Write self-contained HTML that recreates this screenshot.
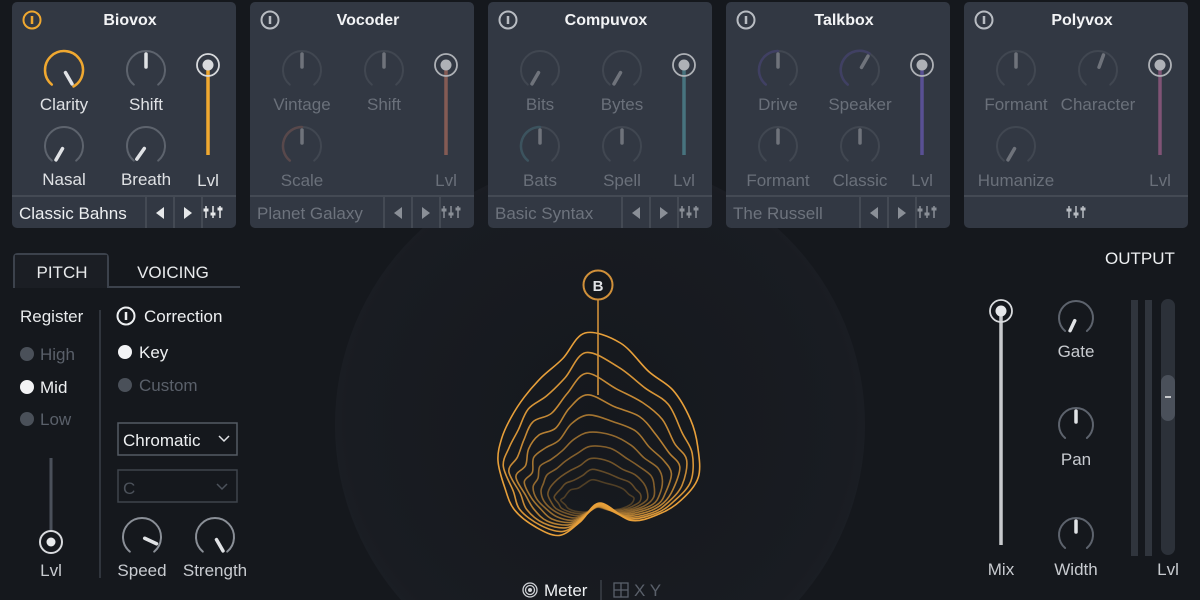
<!DOCTYPE html>
<html><head><meta charset="utf-8"><style>
html,body{margin:0;padding:0;background:#15181d;width:1200px;height:600px;overflow:hidden}
svg{display:block}
text{font-family:"Liberation Sans",sans-serif}
</style></head><body>
<svg id="s" width="1200" height="600" viewBox="0 0 1200 600" xmlns="http://www.w3.org/2000/svg">
<defs>
<radialGradient id="bg" cx="600" cy="420" r="280" gradientUnits="userSpaceOnUse">
<stop offset="0" stop-color="#15181d"/><stop offset="0.9" stop-color="#191c22"/><stop offset="1" stop-color="#1c1f25"/>
</radialGradient>
</defs>
<rect width="1200" height="600" fill="#15181d"/>
<circle cx="600" cy="425" r="265" fill="url(#bg)"/>
<g id="g"></g>
</svg>
<script>
const g=document.getElementById('g');let h='';
function P(a){return a*Math.PI/180}
function pt(cx,cy,r,a){return [cx+r*Math.sin(P(a)),cy-r*Math.cos(P(a))]}
function arc(cx,cy,r,a1,a2,col,w){const p1=pt(cx,cy,r,a1),p2=pt(cx,cy,r,a2);const large=(a2-a1)>180?1:0;
return `<path d="M${p1[0].toFixed(1)} ${p1[1].toFixed(1)} A${r} ${r} 0 ${large} 1 ${p2[0].toFixed(1)} ${p2[1].toFixed(1)}" fill="none" stroke="${col}" stroke-width="${w}" stroke-linecap="round"/>`}
function knob(cx,cy,ang,op,acol,afrom,r,ac){r=r||19;let s=`<g opacity="${op}">`;
s+=arc(cx,cy,r,-140,140,ac||'#5d636d',2);
if(acol){s+=arc(cx,cy,r,afrom,ang,acol,2.5)}
const a=pt(cx,cy,3,ang),b=pt(cx,cy,r-3,ang);
s+=`<line x1="${a[0]}" y1="${a[1]}" x2="${b[0]}" y2="${b[1]}" stroke="#e0e2e5" stroke-width="3.5" stroke-linecap="round"/></g>`;return s}
function txt(x,y,t,sz,col,wt,anc){return `<text x="${x}" y="${y}" font-size="${sz}" fill="${col}" font-weight="${wt||'normal'}" text-anchor="${anc||'middle'}">${t}</text>`}
function power(cx,cy,col){return `<circle cx="${cx}" cy="${cy}" r="8.5" fill="none" stroke="${col}" stroke-width="2"/><line x1="${cx}" y1="${cy-4}" x2="${cx}" y2="${cy+4}" stroke="${col}" stroke-width="2.5"/>`}
function mixer(cx,cy,col){let s='';[-7,0,7].forEach((d,i)=>{s+=`<line x1="${cx+d}" y1="${cy-6}" x2="${cx+d}" y2="${cy+6}" stroke="${col}" stroke-width="1.5"/><rect x="${cx+d-2.5}" y="${cy+[-2,2,-3][i]-1.5}" width="5" height="3" fill="${col}"/>`});return s}
function vslider(x,y1,y2,col,op){return `<g opacity="${op}"><line x1="${x}" y1="${y1}" x2="${x}" y2="${y2}" stroke="${col}" stroke-width="3.5"/><circle cx="${x}" cy="${y1}" r="11" fill="none" stroke="#d8dadd" stroke-width="1.8"/><circle cx="${x}" cy="${y1}" r="5.5" fill="#d8dadd"/></g>`}
const panels=[
{x:12,t:'Biovox',on:true,col:'#f0a830',preset:'Classic Bahns',k:[['Clarity',150,'#f0a830',-140],['Shift',0],['Nasal',-150],['Breath',-145]]},
{x:250,t:'Vocoder',col:'#a0675a',preset:'Planet Galaxy',k:[['Vintage',0],['Shift',0],['Scale',0,'#a0675a',-140],null]},
{x:488,t:'Compuvox',col:'#4f8792',preset:'Basic Syntax',k:[['Bits',-150],['Bytes',-150],['Bats',0,'#4f8792',-140],['Spell',0]]},
{x:726,t:'Talkbox',col:'#6658b0',preset:'The Russell',k:[['Drive',0,'#5a4fa0',-140],['Speaker',30,'#5a4fa0',-140],['Formant',0],['Classic',0]]},
{x:964,t:'Polyvox',col:'#9a5c86',preset:null,k:[['Formant',0],['Character',20],['Humanize',-150],null]}];
panels.forEach(p=>{const x=p.x;
h+=`<rect x="${x}" y="2" width="224" height="226" rx="5" fill="#323843"/>`;
h+=`<line x1="${x}" y1="196" x2="${x+224}" y2="196" stroke="#4a505b" stroke-width="1.5"/>`;
h+=power(x+20,20,p.on?'#f0a830':'#b8bcc2');
h+=txt(x+118,25,p.t,16,'#f2f3f5','bold');
const op=p.on?1:0.35, lc=p.on?'#dfe1e4':'#6a707a';
const pos=[[x+52,70,110],[x+134,70,110],[x+52,146,185],[x+134,146,185]];
p.k.forEach((k,i)=>{if(!k)return;const [cx,cy,ly]=pos[i];h+=knob(cx,cy,k[1],op,k[2],k[3]);h+=txt(cx,ly+(i>=2&&!p.on?1:0),k[0],17,lc);});
h+=vslider(x+196,65,155,p.col,p.on?1:0.75);
h+=txt(x+196,186,'Lvl',17,lc);
if(p.preset){
h+=txt(x+7,219,p.preset,17,p.on?'#eceef0':'#6d737d','normal','start');
[x+134,x+162,x+190].forEach(v=>h+=`<line x1="${v}" y1="197" x2="${v}" y2="228" stroke="#4a505b" stroke-width="1.5"/>`);
const tc=p.on?'#e6e8ea':'#8a8f97';
h+=`<polygon points="${x+152},207 ${x+152},219 ${x+144},213" fill="${tc}"/><polygon points="${x+172},207 ${x+172},219 ${x+180},213" fill="${tc}"/>`;
h+=mixer(x+201,212,tc);
}else h+=mixer(x+112,212,'#b8bcc2');
});
// left tabs
h+=`<path d="M14 288 V258 Q14 254 18 254 H104 Q108 254 108 258 V287 H240" fill="none" stroke="#3c424c" stroke-width="2"/>`;
h+=`<rect x="15" y="255" width="92" height="33" fill="#1b1e24"/>`;
h+=txt(62,278,'PITCH',17,'#e8eaec');h+=txt(173,278,'VOICING',17,'#e8eaec');
h+=txt(20,322,'Register',17,'#e8eaec','normal','start');
h+=`<line x1="100" y1="310" x2="100" y2="578" stroke="#30353d" stroke-width="2"/>`;
[['High',354,0],['Mid',387,1],['Low',419,0]].forEach(r=>{h+=`<circle cx="27" cy="${r[1]}" r="7" fill="${r[2]?'#f2f3f5':'#4a5059'}"/>`+txt(40,r[1]+6,r[0],17,r[2]?'#eef0f2':'#5a606a','normal','start')});
h+=`<line x1="51" y1="458" x2="51" y2="540" stroke="#4a505a" stroke-width="3"/><circle cx="51" cy="542" r="11" fill="#15181d" stroke="#d8dadd" stroke-width="2"/><circle cx="51" cy="542" r="4.5" fill="#e8eaec"/>`;
h+=txt(51,576,'Lvl',17,'#c8cbd0');
h+=power(126,316,'#eef0f2')+txt(144,322,'Correction',17,'#eef0f2','normal','start');
h+=`<circle cx="125" cy="352" r="7" fill="#f2f3f5"/>`+txt(139,358,'Key',17,'#eef0f2','normal','start');
h+=`<circle cx="125" cy="385" r="7" fill="#4a5059"/>`+txt(139,391,'Custom',17,'#5a606a','normal','start');
h+=`<rect x="118" y="423" width="119" height="32" fill="none" stroke="#555b65" stroke-width="1.5"/>`+txt(123,446,'Chromatic',17,'#eef0f2','normal','start')+`<path d="M219 436 l5 5 l5 -5" fill="none" stroke="#e0e2e5" stroke-width="1.5"/>`;
h+=`<rect x="118" y="470" width="119" height="32" fill="none" stroke="#3e444d" stroke-width="1.5"/>`+txt(123,494,'C',17,'#4c525b','normal','start')+`<path d="M217 484 l5 5 l5 -5" fill="none" stroke="#4c525b" stroke-width="1.5"/>`;
h+=knob(142,537,115,1,null,null,19,'#8a8f97')+txt(142,576,'Speed',17,'#c8cbd0');
h+=knob(215,537,150,1,null,null,19,'#8a8f97')+txt(215,576,'Strength',17,'#c8cbd0');
// output
h+=txt(1140,264,'OUTPUT',17,'#eef0f2');
h+=`<line x1="1001" y1="311" x2="1001" y2="545" stroke="#c8cacd" stroke-width="3.5"/><circle cx="1001" cy="311" r="11" fill="none" stroke="#d8dadd" stroke-width="1.8"/><circle cx="1001" cy="311" r="5.5" fill="#e6e8ea"/>`;
h+=txt(1001,575,'Mix',17,'#c8cbd0');
h+=knob(1076,318,-155,1,null,null,17)+txt(1076,357,'Gate',17,'#c8cbd0');
h+=knob(1076,425,0,1,null,null,17)+txt(1076,465,'Pan',17,'#c8cbd0');
h+=knob(1076,535,0,1,null,null,17)+txt(1076,575,'Width',17,'#c8cbd0');
h+=`<rect x="1131" y="300" width="7" height="256" fill="#30353d"/><rect x="1145" y="300" width="7" height="256" fill="#30353d"/>`;
h+=`<rect x="1161" y="299" width="14" height="256" rx="7" fill="#2c3139"/><rect x="1161" y="375" width="14" height="46" rx="7" fill="#4a505a"/><line x1="1165" y1="397" x2="1171" y2="397" stroke="#c8cacd" stroke-width="2"/>`;
h+=txt(1168,575,'Lvl',17,'#c8cbd0');
// contours
const O=[[585,333],[620,346],[650,368],[672,392],[690,420],[700,445],[696,478],[682,500],[660,514],[630,520],[600,503],[580,522],[560,535],[535,528],[516,510],[505,488],[496,460],[504,440],[510,416],[524,396],[543,380],[562,355]];
const ax=597,ay=508,n=O.length;
function cr(pts){let d='';for(let i=0;i<pts.length;i++){const p0=pts[(i-1+pts.length)%pts.length],p1=pts[i],p2=pts[(i+1)%pts.length],p3=pts[(i+2)%pts.length];
if(i==0)d+=`M${p1[0].toFixed(1)} ${p1[1].toFixed(1)}`;
const c1=[p1[0]+(p2[0]-p0[0])/6,p1[1]+(p2[1]-p0[1])/6],c2=[p2[0]-(p3[0]-p1[0])/6,p2[1]-(p3[1]-p1[1])/6];
d+=`C${c1[0].toFixed(1)} ${c1[1].toFixed(1)} ${c2[0].toFixed(1)} ${c2[1].toFixed(1)} ${p2[0].toFixed(1)} ${p2[1].toFixed(1)}`}return d+'Z'}
for(let i=0;i<10;i++){const s=1-i*0.072;
const pts=O.map((p,j)=>{const w=1+0.025*Math.sin(j*2.3+i*0.9);const sy=s+(1-s)*0.15;return [ax+(p[0]-ax)*s*w,ay+(p[1]-ay)*sy*s*w/ (s>0?1:1)]});
h+=`<path d="${cr(pts)}" fill="none" stroke="#e8a03a" stroke-width="1.6" opacity="${(1-i*0.08).toFixed(2)}"/>`;}
h+=`<line x1="598" y1="300" x2="598" y2="395" stroke="#d0903a" stroke-width="1.6"/><circle cx="598" cy="285" r="14.5" fill="#15181d" stroke="#d0903a" stroke-width="2"/>`+txt(598,291,'B',15,'#e0e2e5','bold');
h+=`<circle cx="530" cy="590" r="7" fill="none" stroke="#cfd2d6" stroke-width="1.3"/><circle cx="530" cy="590" r="4.5" fill="none" stroke="#cfd2d6" stroke-width="1.3"/><circle cx="530" cy="590" r="2" fill="#cfd2d6"/>`+txt(544,596,'Meter',17,'#eef0f2','normal','start');
h+=`<line x1="601" y1="580" x2="601" y2="600" stroke="#3a3f47" stroke-width="1.5"/><rect x="614" y="583" width="14" height="14" fill="none" stroke="#5a606a" stroke-width="1.3"/><line x1="621" y1="583" x2="621" y2="597" stroke="#5a606a" stroke-width="1.3"/><line x1="614" y1="590" x2="628" y2="590" stroke="#5a606a" stroke-width="1.3"/>`+txt(634,596,'X Y',17,'#5a606a','normal','start');
g.innerHTML=h;
</script>
</body></html>
